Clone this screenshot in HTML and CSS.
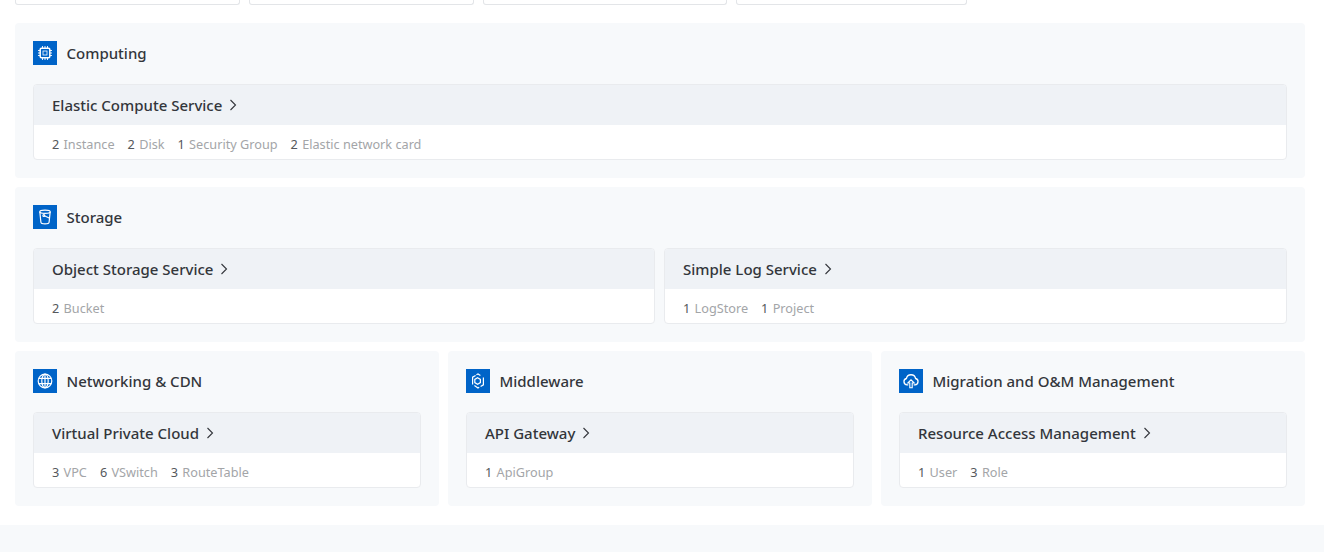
FILE: index.html
```html
<!DOCTYPE html>
<html lang="en">

<head>
    <meta charset="UTF-8">
    <meta name="viewport" content="width=device-width, initial-scale=1.0">
    <title>Resource Overview</title>
    <link rel="stylesheet" href="styles.css">
</head>

<body>
    <div class="content">
        <div class="top-tabs">
            <div class="top-tab tab-a"></div>
            <div class="top-tab tab-a"></div>
            <div class="top-tab tab-b"></div>
            <div class="top-tab tab-c"></div>
        </div>

        <section class="group">
            <div class="group-title">
                <span class="group-icon">
                    <svg viewBox="0 0 16 16" fill="none" stroke="#fff">
                        <rect x="3.2" y="3.2" width="9.600" height="9.600" rx="1.200" stroke-width="1.500" />
                        <rect x="6" y="6" width="4" height="4" stroke-width=".8" />
                        <path d="M5.500 1v2M8 1v2M10.500 1v2M5.500 13v2M8 13v2M10.500 13v2M1 5.500h2M1 8h2M1 10.500h2M13 5.500h2M13 8h2M13 10.500h2" stroke-width=".9" />
                    </svg>
                </span>
                <h2>Computing</h2>
            </div>
            <div class="cards">
                <div class="card">
                    <div class="card-head">
                        <span>Elastic Compute Service</span>
                        <svg class="chevron" viewBox="0 0 8 12" fill="none" stroke="#33363b" stroke-width="1.1"><path d="M1.500 1l5 5-5 5" /></svg>
                    </div>
                    <div class="card-body">
                        <span class="stat"><b>2</b> Instance</span>
                        <span class="stat"><b>2</b> Disk</span>
                        <span class="stat"><b>1</b> Security Group</span>
                        <span class="stat"><b>2</b> Elastic network card</span>
                    </div>
                </div>
            </div>
        </section>

        <section class="group">
            <div class="group-title">
                <span class="group-icon">
                    <svg viewBox="0 0 16 16" fill="none" stroke="#fff" stroke-width="1.200">
                        <path d="M2.800 2.800c0-1 2.300-1.600 5.200-1.600s5.200.6 5.200 1.600-2.300 1.600-5.200 1.600-5.200-.6-5.200-1.600z" />
                        <path d="M2.800 2.800l1.100 10.400c.1 1 1.900 1.700 4.100 1.700s4-.7 4.100-1.700l1.100-10.400" />
                        <path d="M7.300 6.800l5.400 2.400" />
                        <circle cx="6.800" cy="6.600" r=".9" />
                    </svg>
                </span>
                <h2>Storage</h2>
            </div>
            <div class="cards cards-two">
                <div class="card">
                    <div class="card-head">
                        <span>Object Storage Service</span>
                        <svg class="chevron" viewBox="0 0 8 12" fill="none" stroke="#33363b" stroke-width="1.1"><path d="M1.500 1l5 5-5 5" /></svg>
                    </div>
                    <div class="card-body">
                        <span class="stat"><b>2</b> Bucket</span>
                    </div>
                </div>
                <div class="card">
                    <div class="card-head">
                        <span>Simple Log Service</span>
                        <svg class="chevron" viewBox="0 0 8 12" fill="none" stroke="#33363b" stroke-width="1.1"><path d="M1.500 1l5 5-5 5" /></svg>
                    </div>
                    <div class="card-body">
                        <span class="stat"><b>1</b> LogStore</span>
                        <span class="stat"><b>1</b> Project</span>
                    </div>
                </div>
            </div>
        </section>

        <div class="group-row">
            <section class="group">
                <div class="group-title">
                    <span class="group-icon">
                        <svg viewBox="0 0 16 16" fill="none" stroke="#fff" stroke-width="1.200">
                            <circle cx="8" cy="8" r="6.800" />
                            <ellipse cx="8" cy="8" rx="3.200" ry="6.800" />
                            <path d="M8 1.200v13.600M1.900 5.300h12.200M1.900 10.700h12.200" />
                        </svg>
                    </span>
                    <h2>Networking &amp; CDN</h2>
                </div>
                <div class="cards">
                    <div class="card">
                        <div class="card-head">
                            <span>Virtual Private Cloud</span>
                            <svg class="chevron" viewBox="0 0 8 12" fill="none" stroke="#33363b" stroke-width="1.1"><path d="M1.500 1l5 5-5 5" /></svg>
                        </div>
                        <div class="card-body">
                            <span class="stat"><b>3</b> VPC</span>
                            <span class="stat"><b>6</b> VSwitch</span>
                            <span class="stat"><b>3</b> RouteTable</span>
                        </div>
                    </div>
                </div>
            </section>

            <section class="group">
                <div class="group-title">
                    <span class="group-icon">
                        <svg viewBox="0 0 16 16" fill="none" stroke="#fff" stroke-width="1.200">
                            <path d="M7.600 4.800l2.800 1.600v3.200l-2.800 1.600-2.800-1.600V6.400z" />
                            <path d="M5.600 2.400L2.600 4.200v7.200" />
                            <path d="M6.400 1.800L8 1l2.400 1.400" />
                            <path d="M13.400 4.400v7.400l-2.800 1.700" />
                            <path d="M4.400 12.600L8 15l1.200-.7" />
                        </svg>
                    </span>
                    <h2>Middleware</h2>
                </div>
                <div class="cards">
                    <div class="card">
                        <div class="card-head">
                            <span>API Gateway</span>
                            <svg class="chevron" viewBox="0 0 8 12" fill="none" stroke="#33363b" stroke-width="1.1"><path d="M1.500 1l5 5-5 5" /></svg>
                        </div>
                        <div class="card-body">
                            <span class="stat"><b>1</b> ApiGroup</span>
                        </div>
                    </div>
                </div>
            </section>

            <section class="group">
                <div class="group-title">
                    <span class="group-icon">
                        <svg viewBox="0 0 16 16" fill="none" stroke="#fff" stroke-width="1.300">
                            <path d="M5.300 11.800H4A3.200 3.200 0 0 1 3.400 5.500 4.700 4.700 0 0 1 12.600 5.500 3.200 3.200 0 0 1 12 11.800H10.700" />
                            <path d="M6.800 14.800h2.400V10h2L8 6.800 4.800 10h2z" stroke-width="1.100" />
                        </svg>
                    </span>
                    <h2>Migration and O&amp;M Management</h2>
                </div>
                <div class="cards">
                    <div class="card">
                        <div class="card-head">
                            <span>Resource Access Management</span>
                            <svg class="chevron" viewBox="0 0 8 12" fill="none" stroke="#33363b" stroke-width="1.1"><path d="M1.500 1l5 5-5 5" /></svg>
                        </div>
                        <div class="card-body">
                            <span class="stat"><b>1</b> User</span>
                            <span class="stat"><b>3</b> Role</span>
                        </div>
                    </div>
                </div>
            </section>
        </div>
    </div>
    <div class="footer"></div>
</body>

</html>
```

FILE: styles.css
```css
html,
body {
    height: 100%;
}

body {
    margin: 0;
    background-color: #fff;
    color: #33363b;
    font-family: "Noto Sans", sans-serif;
    overflow: hidden;
}

.content {
    display: flex;
    flex-direction: column;
    gap: 9px;
    padding: 0 19px 19px 15px;
}

.top-tabs {
    display: flex;
    gap: 9px;
    height: 5px;
    margin-bottom: 9px;
}

.top-tab {
    border: 1px solid #e3e5e8;
    border-top: none;
    border-radius: 0 0 3px 3px;
    box-sizing: border-box;
}

.tab-a {
    width: 225px;
}

.tab-b {
    width: 244px;
}

.tab-c {
    width: 231px;
}

.group {
    background-color: #f7f9fb;
    border-radius: 4px;
    padding: 18px;
}

.group-row {
    display: grid;
    grid-template-columns: repeat(3, 1fr);
    gap: 9px;
}

.group-title {
    display: flex;
    align-items: center;
    gap: 9.5px;
    height: 24px;
    margin-bottom: 19px;
}

.group-title h2 {
    margin: 0;
    font-size: 15px;
    font-weight: 500;
}

.group-icon {
    display: flex;
    align-items: center;
    justify-content: center;
    width: 24px;
    height: 24px;
    background-color: #0064c8;
}

.group-icon svg {
    width: 16px;
    height: 16px;
}

.cards {
    display: flex;
    gap: 9px;
}

.cards-two {
    display: grid;
    grid-template-columns: 622px 1fr;
}

.card {
    flex: 1;
    min-width: 0;
    background-color: #fff;
    border: 1px solid #e9ebee;
    border-radius: 4px;
    overflow: hidden;
}

.card-head {
    display: flex;
    align-items: center;
    gap: 7px;
    height: 40px;
    padding: 0 18px;
    background-color: #eff2f6;
    font-size: 15px;
    font-weight: 500;
}

.chevron {
    width: 8px;
    height: 12px;
}

.card-body {
    display: flex;
    align-items: center;
    gap: 13px;
    box-sizing: border-box;
    height: 34px;
    padding: 4px 18px 0;
    font-size: 12.7px;
    color: #a3a5a8;
}

.stat b {
    margin-right: 1px;
    font-weight: 400;
    color: #55585c;
}

.footer {
    height: 27px;
    background-color: #f7f9fb;
}
```
